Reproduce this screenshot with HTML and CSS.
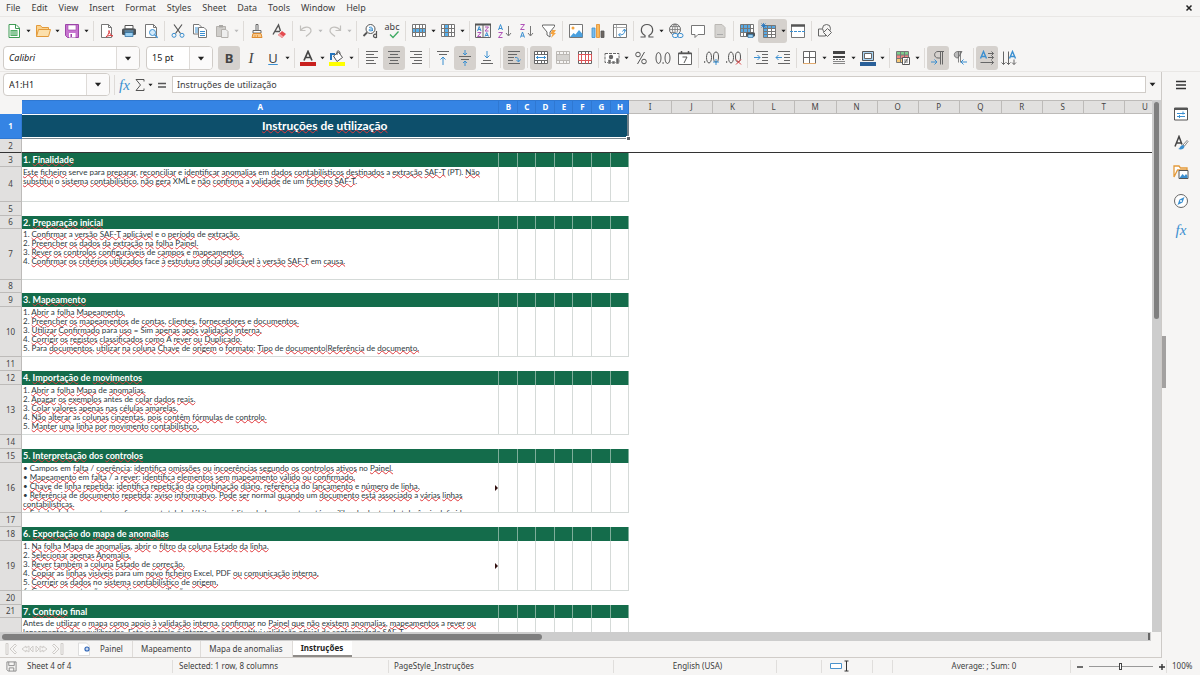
FILE: index.html
```html
<!DOCTYPE html>
<html lang="pt">
<head>
<meta charset="utf-8">
<title>Instruções</title>
<link rel="stylesheet" href="styles.css">
</head>
<body>
<svg class="defs" aria-hidden="true">
  <symbol id="grid" viewBox="0 0 16 16"><path d="M1.500 1.500h13v12h-13zM1.500 5.500h13M1.500 9.500h13M4.500 1.500v12M8.500 1.500v12M11.500 1.500v12"/></symbol>
  <symbol id="down" viewBox="0 0 6 4"><path d="M0.5 0.5h5L3 3.5z"/></symbol>
</svg>

<nav class="menubar">
  <button>File</button><button>Edit</button><button>View</button><button>Insert</button><button>Format</button><button>Styles</button><button>Sheet</button><button>Data</button><button>Tools</button><button>Window</button><button>Help</button>
  <button class="close" aria-label="Close"><svg viewBox="0 0 8 8"><path d="M1.500 1.500l5 5M6.500 1.500l-5 5" stroke="#222" stroke-width="1.500"/></svg></button>
</nav>

<div class="toolbar">
  <button class="tb" aria-label="New"><svg viewBox="0 0 16 16"><path d="M3 1.500h7l3.500 3.500v9.500H3z" fill="#fff" stroke="#3f9b55"/><path d="M9.500 1.500v4h4" stroke="#3f9b55"/><path d="M4.500 7h7v6h-7z" fill="#52ad67"/><path d="M5 9h6M5 11h6" stroke="#fff" stroke-width=".7"/></svg></button>
  <button class="drop" aria-label="More"><svg><use href="#down"/></svg></button>
  <button class="tb" aria-label="Open"><svg viewBox="0 0 16 16"><path d="M1.500 13.500v-11h4l1.500 2h6.500v2.500" fill="#fbd38e" stroke="#e39a3b"/><path d="M1.500 13.500l2-7h12l-2 7z" fill="#fce0ac" stroke="#e39a3b"/></svg></button>
  <button class="drop" aria-label="More"><svg><use href="#down"/></svg></button>
  <button class="tb" aria-label="Save"><svg viewBox="0 0 16 16"><path d="M1.500 1.500h13v13h-11l-2-2z" fill="#c774cf" stroke="#9c45a8"/><path d="M4 2h8v5H4z" fill="#fff" stroke="#9c45a8" stroke-width=".6"/><path d="M5 10h6.500v4.500H5z" fill="#fff"/><path d="M6.500 11h1.500v3H6.500z" fill="#9c45a8"/></svg></button>
  <button class="drop" aria-label="More"><svg><use href="#down"/></svg></button>
  <i class="sep"></i>
  <button class="tb" aria-label="Export PDF"><svg viewBox="0 0 16 16"><path d="M2.500 1.500h7l3 3v10h-10z" fill="#fff" stroke="#777"/><path d="M9.500 1.500v3h3" stroke="#777"/><path d="M10 7.500c0 3-1 4.500-3 6.500 2-1.500 4-2 7-1-2-.5-3.500-2-4-5.500z" stroke="#dc3e42"/></svg></button>
  <button class="tb" aria-label="Print"><svg viewBox="0 0 16 16"><path d="M4 2.500h8V6H4z" fill="#fff" stroke="#555"/><rect x="1" y="5.500" width="14" height="6.500" rx="1.500" fill="#4d5357"/><path d="M3.500 8h9" stroke="#68afe0"/><path d="M4 9.500h8v4H4z" fill="#9bd0f2" stroke="#3574a5" stroke-width=".8"/></svg></button>
  <button class="tb" aria-label="Print preview"><svg viewBox="0 0 16 16"><path d="M2.500 1.500h8l3 3v10h-11z" fill="#fff" stroke="#777"/><path d="M10.500 1.500v3h3" stroke="#777"/><circle cx="9.500" cy="9.500" r="3" fill="#d4eafa" stroke="#4092d2"/><path d="M11.700 11.700l3 3" stroke="#4092d2" stroke-width="1.400"/></svg></button>
  <i class="sep"></i>
  <button class="tb" aria-label="Cut"><svg viewBox="0 0 16 16"><path d="M4 1.500l6.500 9M12 1.500l-6.500 9" stroke="#555" stroke-width="1.200"/><circle cx="4" cy="12.300" r="2" stroke="#3b8fd0"/><circle cx="12" cy="12.300" r="2" stroke="#3b8fd0"/></svg></button>
  <button class="tb" aria-label="Copy"><svg viewBox="0 0 16 16"><path d="M1.500 1.500h5.500l2.500 2.500v7h-8z" fill="#fff" stroke="#777"/><path d="M3 5h3M3 7h3M3 9h3" stroke="#3b8fd0"/><path d="M6.500 4.500H12l2.500 2.500v7.500h-8z" fill="#fff" stroke="#777"/><path d="M8 8.500h5M8 10.500h5M8 12.500h5" stroke="#3b8fd0"/></svg></button>
  <button class="tb" aria-label="Paste"><svg viewBox="0 0 16 16"><path d="M2.500 3.500h9v10h-9z" fill="#cfcdca" stroke="#b4b1ad"/><path d="M5 2h4v2.500H5z" fill="#aaa8a5"/><path d="M7.500 6.500H12l2 2v6H7.500z" fill="#eee" stroke="#b4b1ad"/></svg></button>
  <button class="drop dim" aria-label="More"><svg><use href="#down"/></svg></button>
  <i class="sep"></i>
  <button class="tb" aria-label="Clone formatting"><svg viewBox="0 0 16 16"><path d="M7 1.500h2v6H7zM4 7.500h8v2.500H4z" fill="#fff" stroke="#666"/><path d="M4 10.500h8l1 4H3z" fill="#f9c98c" stroke="#df8c2f"/><path d="M6 12v2M8.500 12v2" stroke="#df8c2f" stroke-width=".7"/></svg></button>
  <button class="tb" aria-label="Clear formatting"><svg viewBox="0 0 16 16"><path d="M2 11.500L7.500 2l2 6M4 8.500h5" stroke="#555" stroke-width="1.400"/><path d="M7 12l4-4 4 3-4 4z" fill="#e44b50"/><path d="M7 12l1.500-1.500 4 3-1.500 1.500z" fill="#f3a5a6"/></svg></button>
  <i class="sep"></i>
  <button class="tb" aria-label="Undo"><svg viewBox="0 0 16 16"><path d="M2.500 2.500v5h5M3 7c3-4 10-4 10 1 0 2-2 3-5 5.500" stroke="#c2c0bd" stroke-width="1.200"/></svg></button>
  <button class="drop dim" aria-label="More"><svg><use href="#down"/></svg></button>
  <button class="tb" aria-label="Redo"><svg viewBox="0 0 16 16"><path d="M13.500 2.500v5h-5M13 7c-3-4-10-4-10 1 0 2 2 3 5 5.500" stroke="#c2c0bd" stroke-width="1.200"/></svg></button>
  <button class="drop dim" aria-label="More"><svg><use href="#down"/></svg></button>
  <i class="sep"></i>
  <button class="tb" aria-label="Find and replace"><svg viewBox="0 0 16 16"><circle cx="8.500" cy="6" r="4.500" fill="#fff" stroke="#555"/><path d="M5 9.500L1.500 13" stroke="#555" stroke-width="1.800"/><path d="M7 4.500c3-1 3.500 0 3.500 3.500M10.500 6c-5-.5-4.500 3 0 1.500" stroke="#3b8fd0"/><path d="M14.500 8v7M14.500 11.500c-3-1.500-5 3.500 0 3" stroke="#555" stroke-width="1.200"/></svg></button>
  <button class="tb spell" aria-label="Spelling"><span>abc</span><svg viewBox="0 0 16 8"><path d="M6 3.500l3 3 5.500-6" stroke="#3eaa62" stroke-width="1.300"/></svg></button>
  <i class="sep"></i>
  <button class="tb" aria-label="Row"><svg viewBox="0 0 16 16"><path d="M1 1h14v13H1z" fill="#fff"/><path d="M1 5.500h14v4H1z" fill="#58b1ed"/><use href="#grid" stroke="#777"/></svg></button>
  <button class="drop" aria-label="More"><svg><use href="#down"/></svg></button>
  <button class="tb" aria-label="Column"><svg viewBox="0 0 16 16"><path d="M1 1h14v13H1z" fill="#fff"/><path d="M4.500 1h4v13h-4z" fill="#58b1ed"/><use href="#grid" stroke="#777"/></svg></button>
  <button class="drop" aria-label="More"><svg><use href="#down"/></svg></button>
  <i class="sep"></i>
  <button class="tb" aria-label="Sort"><svg viewBox="0 0 16 16"><path d="M.500 1.500h15v13H.500zM8 1.500v13" stroke="#666"/><path d="M0 1.500h16" stroke="#555" stroke-width="2"/><path d="M2.500 8l1.700-4.500L6 8M3 6.500h2.500M10 13.500l1.700-4L13.500 13.500M10.500 12.500H13" stroke="#3b8fd0"/><path d="M2.500 9.500H6l-3.500 4H6M10 4h3.500L10 8h3.500" stroke="#b052b8"/></svg></button>
  <button class="tb" aria-label="Sort ascending"><svg viewBox="0 0 16 16"><path d="M1.500 7l2-5.500L5.500 7M2 5.500h3" stroke="#3b8fd0"/><path d="M1.500 9.500h4l-4 5h4" stroke="#b052b8"/><path d="M11.500 3v9.500M9 10l2.500 3 2.500-3" stroke="#777"/></svg></button>
  <button class="tb" aria-label="Sort descending"><svg viewBox="0 0 16 16"><path d="M1.500 1.500h4l-4 5h4" stroke="#b052b8"/><path d="M1.500 14.500l2-5.500 2 5.500M2 13h3" stroke="#3b8fd0"/><path d="M11.500 3v9.500M9 10l2.500 3 2.500-3" stroke="#777"/></svg></button>
  <button class="tb" aria-label="AutoFilter"><svg viewBox="0 0 16 16"><path d="M1.500 2h12v1.500L9 9v5l-3-2V9L1.500 3.500z" fill="#fff" stroke="#666"/><path d="M11 7h4l-2 3h2l-5 5 1.500-4H9.500z" fill="#f5a440"/></svg></button>
  <i class="sep"></i>
  <button class="tb" aria-label="Image"><svg viewBox="0 0 16 16"><path d="M1.500 1.500h13v13h-13z" fill="#fff" stroke="#777"/><path d="M2 14l3.500-4 2 1.500L11 7l3.500 4v3z" fill="#4aa0de"/><circle cx="5" cy="5" r="1.500" fill="#f3a33f"/></svg></button>
  <button class="tb" aria-label="Chart"><svg viewBox="0 0 16 16"><path d="M2 5h3v9.500H2z" fill="#7cbce9" stroke="#3b8fd0" stroke-width=".8"/><path d="M6.500 1.500h3v13h-3z" fill="#f9b95d" stroke="#e28c28" stroke-width=".8"/><path d="M11 8h3v6.500h-3z" fill="#6d6661" stroke="#555" stroke-width=".8"/></svg></button>
  <button class="tb" aria-label="Pivot table"><svg viewBox="0 0 16 16"><path d="M1.500 1.500h13v13h-13z" fill="#fff" stroke="#777"/><path d="M2 4.500h12.500M4.500 2v12.500" stroke="#aaa"/><path d="M7 12c5 0 6-2 5.500-5.500M10.500 8.500l2-2.500 1.500 2.500M8.500 10l-2 2 2 1.500" stroke="#3b8fd0"/></svg></button>
  <i class="sep"></i>
  <button class="tb" aria-label="Special character"><svg viewBox="0 0 16 16"><path d="M1.500 14h4.500v-1.500C0 9 2 1.500 8 1.500S16 9 10 12.500V14h4.500" stroke="#555" stroke-width="1.200"/></svg></button>
  <button class="drop" aria-label="More"><svg><use href="#down"/></svg></button>
  <button class="tb" aria-label="Hyperlink"><svg viewBox="0 0 16 16"><circle cx="7" cy="6.500" r="5.500" stroke="#666"/><path d="M1.500 6.500h11M7 1v11M7 1C3.500 4 3.500 9 7 12M7 1c3.500 3 3.500 8 0 11M2.500 3.500h9M2.500 9.500h5" stroke="#777" stroke-width=".8"/><rect x="4.500" y="10.500" width="5.500" height="4" rx="2" fill="#f6f5f4" stroke="#3b8fd0"/><rect x="9.500" y="10.500" width="5.500" height="4" rx="2" stroke="#3b8fd0"/></svg></button>
  <button class="tb" aria-label="Comment"><svg viewBox="0 0 16 16"><path d="M1.500 2.500h13v9H8l-3 3v-3H1.500z" fill="#fff" stroke="#777"/></svg></button>
  <button class="tb" aria-label="Headers and footers"><svg viewBox="0 0 16 16"><path d="M3 1.500h7l3 3v10H3z" fill="#d5d3d0" stroke="#bbb8b4"/><path d="M5 11.500h6" stroke="#aaa"/></svg></button>
  <i class="sep"></i>
  <button class="tb" aria-label="Print area"><svg viewBox="0 0 16 16"><path d="M1.500 1.500h13v12h-13z" fill="#fff"/><path d="M2 2h9v7.500H2z" fill="#58a9e4"/><use href="#grid" stroke="#777"/><rect x="7" y="9.500" width="9" height="4" rx="1" fill="#4d5357"/><path d="M9 11.500h5v3H9z" fill="#9bd0f2" stroke="#3574a5" stroke-width=".7"/></svg></button>
  <button class="tb on joined" aria-label="Freeze rows and columns"><svg viewBox="0 0 16 16"><path d="M2.500 2.500h12v12h-12z" fill="#fff"/><path d="M2.500 2.500h12v3h-12zM2.500 2.500h4v12h-4z" fill="#58a9e4"/><path d="M2.500 2.500h12v12h-12zM2.500 5.500h12M2.500 8.500h12M2.500 11.500h12M6.500 2.500v12M10.500 2.500v12" stroke="#777"/><path d="M2.500 0v5.500M0 2.500h5.500M.500.500l4 4M4.500.500l-4 4" stroke="#2574bc" stroke-width=".8"/></svg></button>
  <button class="drop on joined" aria-label="More"><svg><use href="#down"/></svg></button>
  <button class="tb" aria-label="Split window"><svg viewBox="0 0 16 16"><path d="M1.500 2.500h13v12h-13z" fill="#fff" stroke="#777"/><path d="M1 2.500h14" stroke="#555" stroke-width="2.500"/><path d="M0 8.500h16" stroke="#3b8fd0" stroke-dasharray="3 1"/></svg></button>
  <i class="sep"></i>
  <button class="tb" aria-label="Draw functions"><svg viewBox="0 0 16 16"><path d="M1.500 6h7v7h-7z" stroke="#666"/><circle cx="9.500" cy="5.500" r="4" fill="#f6f5f4" stroke="#666"/><path d="M10.500 5.500l4 4-4 4-4-4z" fill="#f6f5f4" stroke="#666"/></svg></button>
</div>

<div class="toolbar format">
  <div class="combo font"><input class="italic" aria-label="Font name" value="Calibri"><button aria-label="Font list"><svg><use href="#down"/></svg></button></div>
  <div class="combo size"><input aria-label="Font size" value="15 pt"><button aria-label="Size list"><svg><use href="#down"/></svg></button></div>
  <button class="tb on glyph bold">B</button>
  <button class="tb glyph slant">I</button>
  <button class="tb glyph under">U</button>
  <button class="drop" aria-label="More"><svg><use href="#down"/></svg></button>
  <i class="sep"></i>
  <button class="tb" aria-label="Font color"><svg viewBox="0 0 16 16"><path d="M4 10.500L8 1.500l4 9M5.500 7.500h5" stroke="#444" stroke-width="1.700"/><path d="M0 12h16v4H0z" fill="#c9211e"/></svg></button>
  <button class="drop" aria-label="More"><svg><use href="#down"/></svg></button>
  <button class="tb" aria-label="Highlighting"><svg viewBox="0 0 16 16"><path d="M4.500 6l5-4 4 5.500-5.500 4z" fill="#fff" stroke="#555"/><path d="M8 5V1.500c2-1.500 3 0 3 2.500" stroke="#555"/><path d="M2 10V4h4" stroke="#2574bc" stroke-width="2"/><path d="M0 12h16v4H0z" fill="#ffff00"/></svg></button>
  <button class="drop" aria-label="More"><svg><use href="#down"/></svg></button>
  <i class="sep"></i>
  <button class="tb" aria-label="Align left"><svg viewBox="0 0 16 16"><path d="M2 1.500h12M2 4.500h8M2 7.500h12M2 10.500h8M2 13.500h10" stroke="#666"/></svg></button>
  <button class="tb on" aria-label="Align center"><svg viewBox="0 0 16 16"><path d="M2 1.500h12M4 4.500h8M2 7.500h12M4 10.500h8M3 13.500h10" stroke="#666"/></svg></button>
  <button class="tb" aria-label="Align right"><svg viewBox="0 0 16 16"><path d="M2 1.500h12M6 4.500h8M2 7.500h12M6 10.500h8M4 13.500h10" stroke="#666"/></svg></button>
  <i class="sep"></i>
  <button class="tb" aria-label="Align top"><svg viewBox="0 0 16 16"><path d="M2 1.500h12M4 4.500h8" stroke="#666"/><path d="M8 15V7M5.500 9.500L8 7l2.500 2.500" stroke="#3b8fd0"/></svg></button>
  <button class="tb on" aria-label="Center vertically"><svg viewBox="0 0 16 16"><path d="M2 6.500h12M4 9.500h8" stroke="#666"/><path d="M8 0v5M6 3l2 2 2-2M8 16v-5M6 13l2-2 2 2" stroke="#3b8fd0"/></svg></button>
  <button class="tb" aria-label="Align bottom"><svg viewBox="0 0 16 16"><path d="M4 10.500h8M2 13.500h12" stroke="#666"/><path d="M8 1v7M5.500 5.500L8 8l2.500-2.500" stroke="#3b8fd0"/></svg></button>
  <i class="sep"></i>
  <button class="tb on" aria-label="Wrap text"><svg viewBox="0 0 16 16"><path d="M2 1.500h12M2 4.500h9M2 7.500h6M2 10.500h5M2 13.500h12" stroke="#666"/><path d="M9 7.500c3 0 3 0 3.500 4M10.500 10l2 2 2-2.500" stroke="#3b8fd0"/></svg></button>
  <i class="sep"></i>
  <button class="tb on" aria-label="Merge and center"><svg viewBox="0 0 16 16"><path d="M1.500 1.500h13v12h-13z" fill="#fff"/><path d="M1.500 1.500h13v12h-13zM1.500 4.500h13M1.500 10.500h13M4.500 1.500v3M8.500 1.500v3M11.500 1.500v3M4.500 10.500v3M8.500 10.500v3M11.500 10.500v3" stroke="#666"/><path d="M3 7.500h10M5 6L3.500 7.500 5 9M11 6l1.500 1.500L11 9" stroke="#3b8fd0"/></svg></button>
  <button class="tb" aria-label="Merge cells"><svg viewBox="0 0 16 16"><path d="M1.500 4.500h13v6h-13z" fill="#d5d3d0"/><path d="M1.500 1.500h13v12h-13zM1.500 4.500h13M1.500 10.500h13M4.500 1.500v3M8.500 1.500v3M11.500 1.500v3M4.500 10.500v3M8.500 10.500v3M11.500 10.500v3" stroke="#bbb8b4"/></svg></button>
  <button class="tb" aria-label="Split cells"><svg viewBox="0 0 16 16"><path d="M1.500 1.500h13v12h-13zM1.500 4.500h13M4.500 1.500v3M8.500 1.500v3M11.500 1.500v3" fill="#fff" stroke="#666"/><path d="M1.500 4.500h13v6h-13zM4.500 4.500v9M8.500 4.500v9M11.500 4.500v9" stroke="#dc5558"/></svg></button>
  <i class="sep"></i>
  <button class="tb" aria-label="Currency"><svg viewBox="0 0 16 16"><path d="M1 3.500h14v9H1z" fill="#fff" stroke="#666" stroke-dasharray="3 1"/><circle cx="7" cy="7" r="2.200" fill="#666"/><path d="M4 9.500h3V14H4zM8 11h3v3H8zM12 8h3v6h-3z" fill="#666" stroke="#fff" stroke-width=".5"/></svg></button>
  <button class="drop" aria-label="More"><svg><use href="#down"/></svg></button>
  <button class="tb" aria-label="Percent"><svg viewBox="0 0 16 16"><circle cx="5" cy="4.500" r="2.300" stroke="#555"/><circle cx="11" cy="11.500" r="2.300" stroke="#555"/><path d="M11.500 2l-7 12" stroke="#555"/></svg></button>
  <button class="tb" aria-label="Number"><svg viewBox="0 0 16 16"><ellipse cx="3.500" cy="8" rx="2.500" ry="5.500" stroke="#555"/><ellipse cx="12.500" cy="8" rx="2.500" ry="5.500" stroke="#555"/><path d="M7.500 13h1.200" stroke="#555" stroke-width="1.400"/></svg></button>
  <button class="tb" aria-label="Date"><svg viewBox="0 0 16 16"><path d="M1.500 3h13v11.500h-13z" fill="#fff" stroke="#666"/><path d="M1.500 3.500h13M4.500 1v3M11.500 1v3" stroke="#555" stroke-width="1.500"/><path d="M5.500 7h4.500l-3 6" stroke="#555"/></svg></button>
  <i class="sep"></i>
  <button class="tb" aria-label="Add decimal place"><svg viewBox="0 0 16 16"><path d="M0 12h1.200" stroke="#555" stroke-width="1.400"/><ellipse cx="5" cy="7.500" rx="2.500" ry="5.500" stroke="#555"/><ellipse cx="12" cy="7" rx="2.500" ry="5" stroke="#555"/><path d="M12 9v6M9 12h6" stroke="#3b8fd0"/></svg></button>
  <button class="tb" aria-label="Delete decimal place"><svg viewBox="0 0 16 16"><path d="M0 12h1.200" stroke="#555" stroke-width="1.400"/><ellipse cx="5" cy="7.500" rx="2.500" ry="5.500" stroke="#555"/><ellipse cx="12" cy="7" rx="2.500" ry="5" stroke="#555"/><path d="M10 9.500l5 5M15 9.500l-5 5" stroke="#dc3e42"/></svg></button>
  <i class="sep"></i>
  <button class="tb" aria-label="Increase indent"><svg viewBox="0 0 16 16"><path d="M3 1.500h12M9 4.500h6M9 7.500h6M9 10.500h6M3 13.500h12" stroke="#666"/><path d="M1 7.500h6M4.500 5L7 7.500 4.500 10" stroke="#3b8fd0"/></svg></button>
  <button class="tb" aria-label="Decrease indent"><svg viewBox="0 0 16 16"><path d="M3 1.500h12M9 4.500h6M9 7.500h6M9 10.500h6M3 13.500h12" stroke="#666"/><path d="M1 7.500h6M3.500 5L1 7.500 3.500 10" stroke="#3b8fd0"/></svg></button>
  <i class="sep"></i>
  <button class="tb" aria-label="Borders"><svg viewBox="0 0 16 16"><path d="M1.500 1.500h12v12h-12z" fill="#fff" stroke="#666"/><path d="M7.500 1.500v12M1.500 7.500h12" stroke="#666"/><path d="M1 13.500h13" stroke="#e0a96d"/></svg></button>
  <button class="drop" aria-label="More"><svg><use href="#down"/></svg></button>
  <button class="tb" aria-label="Border style"><svg viewBox="0 0 16 16"><path d="M2 2.500h12" stroke="#444" stroke-width="3"/><path d="M2 7h12" stroke="#444" stroke-width="2"/><path d="M2 9.500h12" stroke="#666" stroke-dasharray="2 1"/><path d="M2 11.500h12M2 13.500h12" stroke="#888"/></svg></button>
  <button class="drop" aria-label="More"><svg><use href="#down"/></svg></button>
  <button class="tb" aria-label="Border color"><svg viewBox="0 0 16 16"><path d="M2.500 1.500h11v9h-11z" fill="#a9d4f3" stroke="#555"/><path d="M4.500 3.500h7v5h-7z" fill="#fff" stroke="#666"/><path d="M0 12h16v4H0z" fill="#2a6099"/></svg></button>
  <button class="drop" aria-label="More"><svg><use href="#down"/></svg></button>
  <i class="sep"></i>
  <button class="tb" aria-label="Conditional formatting"><svg viewBox="0 0 16 16"><path d="M2 2h11v3H2z" fill="#7ccb8c"/><path d="M2 5h11v3.500H2z" fill="#ef8584"/><path d="M2 8.500h11v4H2z" fill="#f7ca77"/><path d="M1.500 1.500h12v11h-12zM1.500 5h12M1.500 8.500h12M5.500 1.500v11M9.500 1.500v11" stroke="#777"/><path d="M7.500 7.500h7v7h-7z" fill="#fff" stroke="#555"/><path d="M9 10h4M9 12h4M12.500 8.500l-3 5" stroke="#555" stroke-width=".8"/></svg></button>
  <button class="drop" aria-label="More"><svg><use href="#down"/></svg></button>
  <i class="sep"></i>
  <button class="tb on" aria-label="Left to right"><svg viewBox="0 0 16 16"><path d="M10.500 1.500v13M12.500 1.500v13M14 1.500H8C3.500 1.500 3.500 8 8 8h2" stroke="#666"/><path d="M1 12h6M4.500 9.500L7 12l-2.500 2.500" stroke="#3b8fd0"/></svg></button>
  <button class="tb" aria-label="Right to left"><svg viewBox="0 0 16 16"><path d="M6.500 1.500v11M8.500 1.500v11M10 1.500H6C1 1.500 1 8 6 8z" fill="#bbb" stroke="#666" stroke-width=".8"/><path d="M9 12h6M11.500 9.500L9 12l2.500 2.500" stroke="#3b8fd0"/></svg></button>
  <i class="sep"></i>
  <button class="tb on" aria-label="Text direction horizontal"><svg viewBox="0 0 16 16"><path d="M1.500 8.500L4.500 1.500l3 7M2.500 6.500h4" stroke="#3b8fd0" stroke-width="1.400"/><path d="M9 3.500h5.500M12.500 1.500l2 2-2 2M9 7.500h5.500M12.500 5.500l2 2-2 2M1.500 12.500h13M12.500 10.500l2 2-2 2" stroke="#666"/></svg></button>
  <button class="tb" aria-label="Text direction vertical"><svg viewBox="0 0 16 16"><path d="M8.500 8.500l3-7 3 7M9.500 6.500h4" stroke="#3b8fd0" stroke-width="1.400"/><path d="M2.500 1.500v13M.500 12.500l2 2 2-2M7.500 1.500v13M5.500 12.500l2 2 2-2M13 9.500v5M11 12.500l2 2 2-2" stroke="#666"/></svg></button>
</div>

<div class="middle">
  <div class="work">
    <div class="formula-bar">
      <div class="combo name"><input aria-label="Name box" value="A1:H1"><button aria-label="Names"><svg><use href="#down"/></svg></button></div>
      <i class="sep"></i>
      <button class="fx" aria-label="Function wizard"><em>fx</em></button>
      <button class="sum" aria-label="Sum"><svg viewBox="0 0 12 14"><path d="M10 3.500v-2H2L6.500 7 2 12.500h8v-2" stroke="#555"/></svg></button>
      <button class="drop" aria-label="More"><svg><use href="#down"/></svg></button>
      <button class="sum" aria-label="Formula"><svg viewBox="0 0 12 14"><path d="M2 5.500h8M2 9h8" stroke="#555" stroke-width="1.600"/></svg></button>
      <input class="formula" aria-label="Formula input" value="Instruções de utilização">
      <button class="expand" aria-label="Expand"><svg><use href="#down"/></svg></button>
    </div>

    <div class="sheet">
      <div class="grid">
      <table>
        <colgroup><col class="w22"><col class="wa"><col class="w19"><col class="w18"><col class="w19"><col class="w18"><col class="w19"><col class="w19"><col class="w18"><col class="w42"><col class="w41"><col class="w41"><col class="w41"><col class="w42"><col class="w41"><col class="w41"><col class="w41"><col class="w42"><col class="w41"><col class="w41"><col class="w41"><col class="w41"></colgroup>
        <thead><tr><td class="corner"></td><th class="sel">A</th><th class="sel">B</th><th class="sel">C</th><th class="sel">D</th><th class="sel">E</th><th class="sel">F</th><th class="sel">G</th><th class="sel">H</th><th>I</th><th>J</th><th>K</th><th>L</th><th>M</th><th>N</th><th>O</th><th>P</th><th>Q</th><th>R</th><th>S</th><th>T</th><th>U</th></tr></thead>
        <tbody>
        <tr class="h25"><th class="sel">1</th><td class="title" colspan="8"><u>Instruções</u> de <u>utilização</u><i class="handle"></i></td></tr>
        <tr class="h14 frozen"><th>2</th><td colspan="21"></td></tr>
        <tr class="h14 head"><th>3</th><td>1. <u>Finalidade</u></td><td></td><td></td><td></td><td></td><td></td><td></td><td></td></tr>
        <tr class="h35 body"><th>4</th><td><div class="text"><u>Este</u> <u>ficheiro</u> serve para <u>preparar</u>, <u>reconciliar</u> e <u>identificar</u> <u>anomalias</u> em <u>dados</u> <u>contabilísticos</u> <u>destinados</u> a <u>extração</u> <u>SAF-T</u> (PT). <u>Não</u><br><u>substitui</u> o <u>sistema</u> <u>contabilístico</u>, <u>não</u> <u>gera</u> XML e <u>não</u> <u>confirma</u> a <u>validade</u> de um <u>ficheiro</u> <u>SAF-T</u>.</div></td><td></td><td></td><td></td><td></td><td></td><td></td><td></td></tr>
        <tr class="h14"><th>5</th></tr>
        <tr class="h13 head"><th>6</th><td>2. <u>Preparação</u> <u>inicial</u></td><td></td><td></td><td></td><td></td><td></td><td></td><td></td></tr>
        <tr class="h51 body"><th>7</th><td><div class="text">1. <u>Confirmar</u> a <u>versão</u> <u>SAF-T</u> <u>aplicável</u> e o <u>período</u> de <u>extração.</u><br>2. <u>Preencher</u> <u>os</u> <u>dados</u> <u>da</u> <u>extração</u> <u>na</u> <u>folha</u> <u>Painel.</u><br>3. <u>Rever</u> <u>os</u> <u>controlos</u> <u>configuráveis</u> de <u>campos</u> e <u>mapeamentos.</u><br>4. <u>Confirmar</u> <u>os</u> <u>critérios</u> <u>utilizados</u> face <u>à</u> <u>estrutura</u> <u>oficial</u> <u>aplicável</u> <u>à</u> <u>versão</u> <u>SAF-T</u> em <u>causa.</u></div></td><td></td><td></td><td></td><td></td><td></td><td></td><td></td></tr>
        <tr class="h13"><th>8</th></tr>
        <tr class="h14 head"><th>9</th><td>3. <u>Mapeamento</u></td><td></td><td></td><td></td><td></td><td></td><td></td><td></td></tr>
        <tr class="h50 body"><th>10</th><td><div class="text">1. <u>Abrir</u> a <u>folha</u> <u>Mapeamento.</u><br>2. <u>Preencher</u> <u>os</u> <u>mapeamentos</u> de <u>contas</u>, <u>clientes</u>, <u>fornecedores</u> e <u>documentos.</u><br>3. <u>Utilizar</u> <u>Confirmado</u> para <u>uso</u> = Sim <u>apenas</u> <u>após</u> <u>validação</u> <u>interna.</u><br>4. <u>Corrigir</u> <u>os</u> <u>registos</u> <u>classificados</u> <u>como</u> A <u>rever</u> <u>ou</u> <u>Duplicado.</u><br>5. Para <u>documentos</u>, <u>utilizar</u> <u>na</u> <u>coluna</u> <u>Chave</u> de <u>origem</u> o <u>formato</u>: <u>Tipo</u> de <u>documento</u>|<u>Referência</u> de <u>documento.</u></div></td><td></td><td></td><td></td><td></td><td></td><td></td><td></td></tr>
        <tr class="h14"><th>11</th></tr>
        <tr class="h14 head"><th>12</th><td>4. <u>Importação</u> de <u>movimentos</u></td><td></td><td></td><td></td><td></td><td></td><td></td><td></td></tr>
        <tr class="h50 body"><th>13</th><td><div class="text">1. <u>Abrir</u> a <u>folha</u> <u>Mapa</u> de <u>anomalias.</u><br>2. <u>Apagar</u> <u>os</u> <u>exemplos</u> antes de <u>colar</u> <u>dados</u> <u>reais.</u><br>3. <u>Colar</u> <u>valores</u> <u>apenas</u> <u>nas</u> <u>células</u> <u>amarelas.</u><br>4. <u>Não</u> <u>alterar</u> as <u>colunas</u> <u>cinzentas</u>, <u>pois</u> <u>contêm</u> <u>fórmulas</u> de <u>controlo.</u><br>5. <u>Manter</u> <u>uma</u> <u>linha</u> <u>por</u> <u>movimento</u> <u>contabilístico.</u></div></td><td></td><td></td><td></td><td></td><td></td><td></td><td></td></tr>
        <tr class="h14"><th>14</th></tr>
        <tr class="h14 head"><th>15</th><td>5. <u>Interpretação</u> dos <u>controlos</u></td><td></td><td></td><td></td><td></td><td></td><td></td><td></td></tr>
        <tr class="h50 body"><th>16</th><td class="more"><div class="text">• Campos em <u>falta</u> / <u>coerência</u>: <u>identifica</u> <u>omissões</u> <u>ou</u> <u>incoerências</u> <u>segundo</u> <u>os</u> <u>controlos</u> <u>ativos</u> no <u>Painel.</u><br>• <u>Mapeamento</u> em <u>falta</u> / a <u>rever</u>: <u>identifica</u> <u>elementos</u> <u>sem</u> <u>mapeamento</u> <u>válido</u> <u>ou</u> <u>confirmado.</u><br>• <u>Chave</u> de <u>linha</u> <u>repetida</u>: <u>identifica</u> <u>repetição</u> <u>da</u> <u>combinação</u> <u>diário</u>, <u>referência</u> do <u>lançamento</u> e <u>número</u> de <u>linha.</u><br>• <u>Referência</u> de <u>documento</u> <u>repetida</u>: <u>aviso</u> <u>informativo</u>. <u>Pode</u> <u>ser</u> normal <u>quando</u> um <u>documento</u> <u>está</u> <u>associado</u> a <u>várias</u> <u>linhas</u><br><u>contabilísticas.</u><br>• <u>Estado</u> de <u>lançamento</u>: <u>confirma</u> se o total de <u>débitos</u> e <u>créditos</u> do <u>lançamento</u> <u>está</u> <u>equilibrado</u> <u>dentro</u> da <u>tolerância</u> <u>definida.</u></div></td><td></td><td></td><td></td><td></td><td></td><td></td><td></td></tr>
        <tr class="h14"><th>17</th></tr>
        <tr class="h14 head"><th>18</th><td>6. <u>Exportação</u> do <u>mapa</u> de <u>anomalias</u></td><td></td><td></td><td></td><td></td><td></td><td></td><td></td></tr>
        <tr class="h50 body"><th>19</th><td class="more"><div class="text">1. <u>Na</u> <u>folha</u> <u>Mapa</u> de <u>anomalias</u>, <u>abrir</u> o <u>filtro</u> <u>da</u> <u>coluna</u> <u>Estado</u> <u>da</u> <u>linha.</u><br>2. <u>Selecionar</u> <u>apenas</u> <u>Anomalia.</u><br>3. <u>Rever</u> <u>também</u> a <u>coluna</u> <u>Estado</u> de <u>correção.</u><br>4. <u>Copiar</u> as <u>linhas</u> <u>visíveis</u> para um <u>novo</u> <u>ficheiro</u> Excel, PDF <u>ou</u> <u>comunicação</u> <u>interna.</u><br>5. <u>Corrigir</u> <u>os</u> <u>dados</u> no <u>sistema</u> <u>contabilístico</u> de <u>origem.</u><br>6. <u>Gerar</u> <u>nova</u> <u>extração</u> e <u>repetir</u> a <u>reconciliação.</u></div></td><td></td><td></td><td></td><td></td><td></td><td></td><td></td></tr>
        <tr class="h14"><th>20</th></tr>
        <tr class="h13 head"><th>21</th><td>7. <u>Controlo</u> final</td><td></td><td></td><td></td><td></td><td></td><td></td><td></td></tr>
        <tr class="h35 body"><th></th><td><div class="text">Antes de <u>utilizar</u> o <u>mapa</u> <u>como</u> <u>apoio</u> <u>à</u> <u>validação</u> <u>interna</u>, <u>confirmar</u> no <u>Painel</u> <u>que</u> <u>não</u> <u>existem</u> <u>anomalias</u>, <u>mapeamentos</u> a <u>rever</u> <u>ou</u><br><u>lançamentos</u> <u>desequilibrados</u>. <u>Este</u> <u>controlo</u> <u>é</u> <u>interno</u> e <u>não</u> <u>constitui</u> <u>validação</u> <u>oficial</u> de <u>conformidade</u> <u>SAF-T.</u></div></td><td></td><td></td><td></td><td></td><td></td><td></td><td></td></tr>
        </tbody>
      </table>
      </div>
      <div class="vscroll"><div class="thumb"></div></div>
    </div>
    <div class="hscroll"><div class="thumb"></div><i class="grip"></i></div>

    <div class="tabs">
      <button class="nav" aria-label="First"><svg viewBox="0 0 14 12"><path d="M1 .500h2v11H1zM10 1L5 6l5 5 1.500-1.500L8 6l3.500-3.500z"/></svg></button>
      <button class="nav" aria-label="Previous"><svg viewBox="0 0 14 12"><path d="M6 3L2 6l4 3V7l3 2V3L6 5zM13 3l-3 3 3 3z"/></svg></button>
      <button class="nav" aria-label="Next"><svg viewBox="0 0 14 12"><path d="M8 3l4 3-4 3V7L5 9V3l3 2zM1 3l3 3-3 3z"/></svg></button>
      <button class="nav" aria-label="Last"><svg viewBox="0 0 14 12"><path d="M11 .500h2v11h-2zM4 1l5 5-5 5-1.500-1.500L6 6 2.500 2.500z"/></svg></button>
      <button class="add" aria-label="Add sheet"><svg viewBox="0 0 14 14"><path d="M1.500 1h8l3 3v9.500h-11z" fill="#fff" stroke="#ddd"/><circle cx="10" cy="7" r="2.600" fill="#2f66b8"/><path d="M10 5.500v3M8.500 7h3" stroke="#fff"/></svg></button>
      <button class="tab">Painel</button><button class="tab">Mapeamento</button><button class="tab">Mapa de anomalias</button><button class="tab active">Instruções</button>
    </div>
  </div>

  <aside class="sidebar">
    <i class="splitter"></i>
    <button aria-label="Sidebar settings"><svg viewBox="0 0 16 16"><path d="M3 4.500h10M3 8h10M3 11.500h10" stroke="#333" stroke-width="1.500"/></svg></button>
    <button aria-label="Properties"><svg viewBox="0 0 16 16"><path d="M1.500 2h13v12h-13z" fill="#fff" stroke="#555"/><path d="M1 3h14" stroke="#555" stroke-width="2"/><path d="M4 7.500h8M4 10.500h8M10 5.500v3M6.500 9v3" stroke="#3b8fd0"/></svg></button>
    <button aria-label="Styles"><svg viewBox="0 0 16 16"><path d="M2 11.500L6 1.500l3 8M3.500 8h5" stroke="#444" stroke-width="1.500"/><path d="M10 10l4-4.500 1 1L11.500 11z" fill="#fff" stroke="#666" stroke-width=".8"/><path d="M5 14c2 0 2-4 5-4l1.500 1.500C11 14.500 8 15 5 14z" fill="#3b8fd0"/></svg></button>
    <button aria-label="Gallery"><svg viewBox="0 0 16 16"><path d="M1 13V2h5l1.500 2H14v2H4.500z" fill="#fff" stroke="#e39a3b" stroke-width="1.300"/><path d="M6 6.500h9v8H6z" fill="#fff" stroke="#555"/><path d="M6.500 14l3-4 2 2 1.500-2 1.500 2v2z" fill="#3b8fd0"/></svg></button>
    <button aria-label="Navigator"><svg viewBox="0 0 16 16"><circle cx="8" cy="8" r="6.500" fill="#fff" stroke="#666"/><path d="M11.500 4L9.500 9.500 4.500 12l2-5.500z" fill="#3b8fd0"/><circle cx="8" cy="8" r="1" fill="#fff"/></svg></button>
    <button class="fx" aria-label="Functions"><em>fx</em></button>
  </aside>
</div>

<footer class="status">
  <span class="doc"><svg viewBox="0 0 12 12"><path d="M1 1h10v10H2.500L1 9.500zM3 1v4h6V1M3.500 11V7.500h5V11" stroke="#888"/></svg></span>
  <span class="s-sheet">Sheet 4 of 4</span>
  <span class="s-sel">Selected: 1 row, 8 columns</span>
  <span class="s-page">PageStyle_Instruções</span>
  <span class="s-lang">English (USA)</span>
  <span class="s-insert"></span>
  <span class="s-mode"><svg viewBox="0 0 20 12"><path d="M1.500 3.500h11v5h-11z" fill="#fff" stroke="#4a92cc"/><path d="M15.500 1h4M15.500 11h4M17.500 1v10" stroke="#333"/></svg></span>
  <span class="s-blank"></span>
  <span class="s-sum">Average: ; Sum: 0</span>
  <span class="s-zoom"><button aria-label="Zoom out"><svg viewBox="0 0 8 8"><path d="M1 4h6" stroke="#333" stroke-width="1.400"/></svg></button><input type="range" aria-label="Zoom" min="0" max="100" value="49"><button aria-label="Zoom in"><svg viewBox="0 0 8 8"><path d="M1 4h6M4 1v6" stroke="#333" stroke-width="1.400"/></svg></button></span>
  <span class="s-pct">100%</span>
</footer>
</body>
</html>
```
FILE: styles.css
```css
* { box-sizing: border-box; }

body {
  margin: 0;
  height: 100vh;
  display: flex;
  flex-direction: column;
  overflow: hidden;
  background: #f6f5f4;
  color: #3d3d3d;
  font: 8px/12px "Noto Sans", sans-serif;
}

button, input {
  font: inherit;
  color: inherit;
  border: 0;
  margin: 0;
  padding: 0;
  background: none;
}

svg { fill: none; display: block; }
.defs { position: absolute; width: 0; height: 0; }

/* Menu bar */
.menubar {
  display: flex;
  align-items: center;
  height: 17px;
  flex: none;
  gap: 11px;
  padding: 0 7px 0 6px;
  font-size: 9px;
  border-bottom: 1px solid #e9e7e5;
}
.menubar .close { margin-left: auto; }
.menubar .close svg { width: 8px; height: 8px; }

/* Toolbars */
.toolbar {
  display: flex;
  align-items: center;
  flex: none;
  height: 28px;
  padding-left: 3px;
}
.toolbar.format { height: 27px; border-bottom: 1px solid #e9e7e5; }
.tb {
  flex: none;
  width: 22px;
  height: 24px;
  display: flex;
  align-items: center;
  justify-content: center;
  border-radius: 3px;
}
.tb svg { width: 16px; height: 16px; }
.on { background: #d5d1cd; }
.tb.joined { border-radius: 3px 0 0 3px; }
.drop {
  flex: none;
  width: 7px;
  height: 24px;
  display: flex;
  align-items: center;
  justify-content: center;
}
.drop.joined { border-radius: 0 3px 3px 0; }
.drop svg, .combo svg, .expand svg { width: 5px; height: 4px; fill: #222; }
.drop.dim svg { fill: #bbb; }
.sep { flex: none; width: 1px; height: 20px; margin: 0 2px; background: #dedbd8; }
.drop + .sep { margin-left: 3px; }
.glyph { font-size: 13px; color: #444; }
.bold { font-weight: bold; }
.slant { font-family: "Liberation Serif", serif; font-style: italic; font-size: 15px; }
.under { text-decoration: underline #3b8fd0; }
.spell { flex-direction: column; font-size: 9px; line-height: 8px; }
.spell svg { width: 16px; height: 8px; }

.combo {
  display: flex;
  flex: none;
  height: 24px;
  border: 1px solid #d0ccc8;
  border-radius: 4px;
  background: #fff;
  overflow: hidden;
  font-size: 9px;
}
.combo input { flex: 1; min-width: 0; padding-left: 5px; color: #222; }
.combo button {
  width: 23px;
  display: flex;
  align-items: center;
  justify-content: center;
  border-left: 1px solid #dedbd8;
  background: #fbfafa;
}
.combo svg { width: 8px; height: 5px; }
.combo.font { width: 137px; margin-right: 6px; }
.combo.size { width: 67px; margin-right: 5px; }
.combo.name { width: 107px; height: 23px; margin-right: 2px; }
.italic { font-style: italic; }

/* Work area */
.middle { display: flex; flex: 1; min-height: 0; }
.work { display: flex; flex-direction: column; flex: 1; min-width: 0; }
.formula-bar {
  display: flex;
  align-items: center;
  flex: none;
  height: 28px;
  padding: 0 5px 3px 3px;
}
.fx { width: 16px; color: #3b8fd0; font: 15px/16px "Liberation Serif", serif; }
.formula-bar .fx { width: 15px; }
.formula-bar .sum { width: 15px; }
.sum svg { width: 12px; height: 14px; margin: auto; }
.formula {
  flex: 1;
  min-width: 0;
  height: 17px;
  margin-left: 3px;
  padding-left: 4px;
  font-size: 9px;
  border: 1px solid #d0ccc8;
  background: #fff;
}
.expand { width: 10px; padding-left: 3px; }
.expand svg { width: 7px; height: 5px; }

/* Spreadsheet */
.sheet { display: flex; flex: 1; min-height: 0; }
.grid { flex: 1; min-width: 0; overflow: hidden; background: #fff; }
table {
  width: 1166px;
  table-layout: fixed;
  border-collapse: separate;
  border-spacing: 0;
  white-space: nowrap;
}
.w22 { width: 22px; } .wa { width: 477px; }
.w18 { width: 18px; } .w19 { width: 19px; }
.w41 { width: 41px; } .w42 { width: 42px; }
th, td { padding: 0; }
th {
  font-weight: normal;
  color: #444;
  background: #e1e0df;
  border-right: 1px solid #bdbbb9;
  border-bottom: 1px solid #bdbbb9;
}
thead th, thead td { height: 14px; line-height: 12px; border-top: 1px solid #bdbbb9; }
thead .corner { border-color: #f6f5f4; background: #f6f5f4; }
th.sel { background: #3584e4; color: #fff; font-weight: bold; border-color: #2f78d2; }
.h13 { height: 13px; } .h14 { height: 14px; } .h25 { height: 25px; }
.h35 { height: 35px; } .h50 { height: 50px; } .h51 { height: 51px; }
tbody th, tbody td { line-height: 10px; }
.title {
  position: relative;
  background: #0d4f6b;
  color: #fff;
  text-align: center;
  font: bold 12px/18px Lato, sans-serif;
  border-right: 2px solid #6f7f88;
  border-bottom: 1px solid #7d8a91;
  box-shadow: inset 0 -1px #fff, inset 0 1px #fff;
}
td.title { line-height: 18px; }
.handle {
  position: absolute;
  right: -3px;
  bottom: -2px;
  width: 4px;
  height: 4px;
  background: #5b6167;
  border: 1px solid #fff;
  border-width: 1px 0 0 1px;
}
.frozen th, .frozen td { border-bottom: 1px solid #333; }
.head td {
  background: #146c4b;
  color: #fff;
  font-family: Lato, sans-serif;
  font-weight: bold;
  font-size: 9px;
  padding-left: 1px;
  border-right: 1px solid #7fae9b;
}
.body td { border-right: 1px solid #d5dad8; border-bottom: 1px solid #d5dad8; vertical-align: top; }
.text {
  height: 49px;
  overflow: hidden;
  padding: 1px 0 0 1px;
  font: 8px/9px Lato, sans-serif;
  color: #2e3a40;
}
.h35 .text { height: 34px; }
u {
  text-decoration: underline wavy #e0393c 1px;
  text-decoration-skip-ink: none;
  text-underline-offset: -1px;
}
.more { position: relative; }
.more::after {
  content: "";
  position: absolute;
  right: 0;
  top: 22px;
  border: 3px solid transparent;
  border-left: 3px solid #311;
  border-right: 0;
}

.vscroll { flex: none; width: 9px; background: #cdcdcd; padding: 2px 2px 0; }
.vscroll .thumb { height: 41%; background: #7f7f7f; border-radius: 3px; }
.hscroll { display: flex; align-items: center; justify-content: space-between; flex: none; height: 9px; margin-right: 10px; padding: 0 1px 0 2px; background: #cdcdcd; }
.hscroll .thumb { width: 47%; height: 6px; background: #7f7f7f; border-radius: 3px; }
.grip { width: 2px; height: 7px; background: #666; }

.tabs { display: flex; align-items: center; flex: none; height: 17px; padding-left: 5px; border-bottom: 1px solid #d0ccc8; }
.nav { width: 15px; }
.nav svg { width: 14px; height: 12px; stroke: #cfccc9; stroke-width: 1; }
.add { margin: 0 1px 0 12px; }
.add svg { width: 14px; height: 14px; }
.tab { height: 16px; padding: 0 9px 0 8px; border-right: 1px solid #dedbd8; }
.tab.active { font-weight: bold; color: #222; background: #fff; border-right: 0; border-bottom: 2px solid #8e8b88; }

.sidebar {
  position: relative;
  flex: none;
  width: 39px;
  display: flex;
  flex-direction: column;
  align-items: center;
  gap: 13px;
  padding-top: 5px;
  border-left: 1px solid #cdcac7;
}
.sidebar svg { width: 16px; height: 16px; }
.sidebar button { height: 16px; }
.splitter { position: absolute; left: 0; top: 45%; width: 4px; height: 52px; background: #a3a1a0; }

/* Status bar */
.status { display: flex; align-items: center; flex: none; height: 17px; }
.status > span { flex: none; height: 13px; padding-left: 5px; border-right: 1px solid #e0dedc; }
.status .doc { width: 22px; padding: 1px 0 0 6px; border: 0; }
.doc svg { width: 11px; height: 11px; }
.s-sheet { width: 151px; }
.status .s-sel { width: 216px; padding-left: 6px; }
.status .s-page { flex: 1; }
.s-lang { width: 163px; text-align: center; }
.s-insert { width: 45px; }
.status .s-mode { width: 51px; padding-left: 7px; }
.s-mode svg { width: 20px; height: 12px; }
.s-blank { width: 20px; }
.s-sum { width: 178px; text-align: center; }
.status .s-zoom { display: flex; align-items: center; width: 96px; gap: 5px; padding-left: 5px; }
.s-zoom svg { width: 8px; height: 8px; }
.s-zoom input { appearance: none; flex: 1; min-width: 0; height: 8px; background: linear-gradient(#999, #999) center / 100% 1px no-repeat; }
.s-zoom input::-webkit-slider-thumb { appearance: none; width: 3px; height: 7px; background: #fff; border: 1px solid #444; }
.status .s-pct { width: 33px; border: 0; }
```
